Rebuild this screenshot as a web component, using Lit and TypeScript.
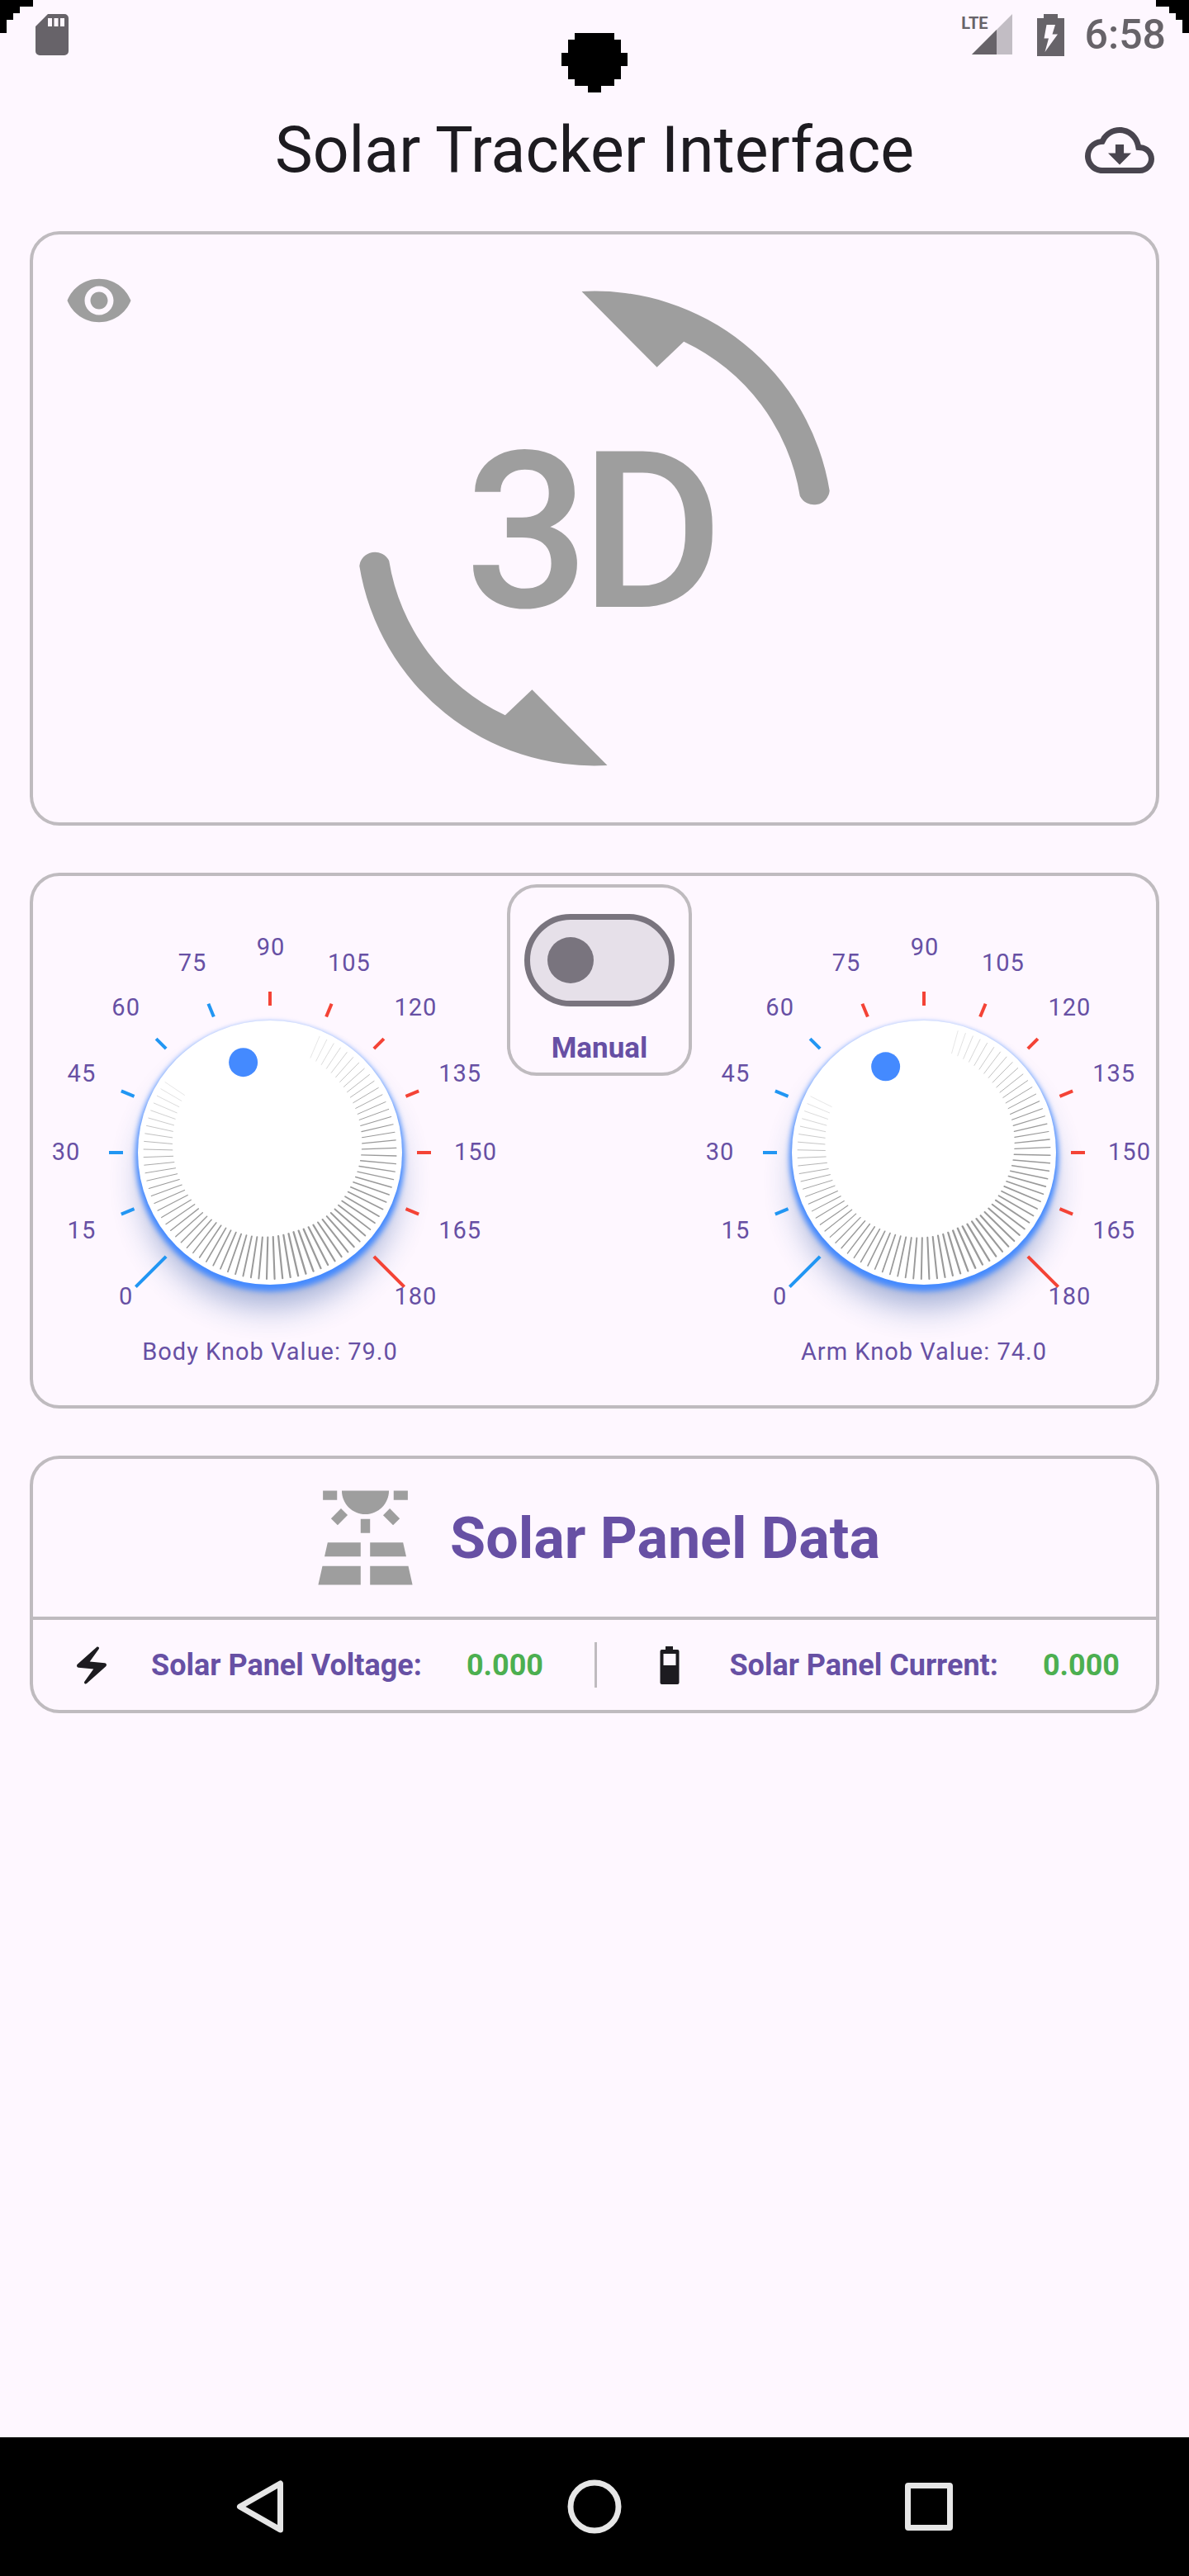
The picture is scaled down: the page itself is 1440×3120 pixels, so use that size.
import { LitElement, html, svg, css } from "lit";
import { customElement, property, state } from "lit/decorators.js";

const STEPS = [0, 15, 30, 45, 60, 75, 90, 105, 120, 135, 150, 165, 180];

/** Degrees clockwise from twelve o'clock for a value on the 0-180 scale. */
const dialAngle = (value: number): number => (value - 90) * 1.5;

const polar = (degrees: number, radius: number) => {
  const a = (degrees * Math.PI) / 180;
  return { x: Math.sin(a) * radius, y: -Math.cos(a) * radius };
};

@customElement("servo-knob")
export class ServoKnob extends LitElement {
  @property() name = "";
  @property({ type: Number }) value = 90;

  static styles = css`
    :host {
      display: flex;
      flex-direction: column;
      align-items: center;
      color: #6750a4;
      font-size: 29px;
      letter-spacing: 1px;
    }
    .dial {
      position: relative;
      width: 100%;
      max-width: 560px;
    }
    .face {
      display: block;
      width: 100%;
      overflow: visible;
    }
    .mark {
      fill: #6750a4;
      text-anchor: middle;
    }
    .tick {
      stroke-width: 4;
    }
    .low {
      stroke: #2196f3;
    }
    .high {
      stroke: #f44336;
    }
    .ambient {
      fill: #1f4a9c;
      opacity: 0.45;
      filter: blur(21px);
    }
    .glow {
      fill: #448aff;
      filter: blur(3px);
    }
    .cap {
      fill: #ffffff;
    }
    .ridge {
      stroke: #9a9a9a;
      stroke-linecap: round;
    }
    .dot {
      fill: #448aff;
    }
    .range {
      position: absolute;
      inset: 0;
      width: 100%;
      height: 100%;
      margin: 0;
      opacity: 0;
      cursor: pointer;
    }
    .caption {
      line-height: 42px;
      white-space: nowrap;
    }
  `;

  private onInput(e: Event) {
    this.value = Number((e.target as HTMLInputElement).value);
  }

  private renderStep(step: number) {
    const angle = dialAngle(step);
    const isEnd = step === 0 || step === 180;
    const a = polar(angle, 178);
    const b = polar(angle, isEnd ? 230 : 195);
    const t = polar(angle, 248);
    return svg`
      <line class="tick ${step <= this.value ? "low" : "high"}"
        x1=${a.x} y1=${a.y} x2=${b.x} y2=${b.y}></line>
      <text class="mark" x=${t.x + 1} y=${t.y + 9}>${step}</text>`;
  }

  private renderRidges() {
    const pointer = dialAngle(this.value);
    const ridges = [];
    for (let i = 11; i <= 89; i++) {
      const rel = i * 3.6;
      const d = rel > 180 ? 360 - rel : rel;
      const inner = 133 - 0.206 * d + Math.max(0, d - 130) * 0.09;
      const width = 0.25 + (2.1 * (d - 39.6)) / 140;
      const a = polar(pointer + rel, inner);
      const b = polar(pointer + rel, 153);
      ridges.push(svg`<line class="ridge" stroke-width=${width}
        x1=${a.x} y1=${a.y} x2=${b.x} y2=${b.y}></line>`);
    }
    return ridges;
  }

  render() {
    const dot = polar(dialAngle(this.value), 114);
    return html`
      <div class="dial">
        <svg class="face" viewBox="-280 -270 560 490" aria-hidden="true">
          <circle class="ambient" cy="33" r="152"></circle>
          <circle class="glow" cy="5" r="163"></circle>
          ${STEPS.map((s) => this.renderStep(s))}
          <circle class="cap" r="160"></circle>
          ${this.renderRidges()}
          <circle class="dot" cx=${dot.x} cy=${dot.y} r="17.5"></circle>
        </svg>
        <input
          class="range"
          id="range"
          type="range"
          min="0"
          max="180"
          .value=${String(this.value)}
          @input=${this.onInput}
        />
      </div>
      <label class="caption" for="range"
        >${this.name} Knob Value: ${this.value.toFixed(1)}</label
      >
    `;
  }
}

@customElement("app-root")
export class AppRoot extends LitElement {
  @state() private manual = false;

  static styles = css`
    :host {
      display: flex;
      flex-direction: column;
      position: relative;
      min-height: 100vh;
      background: #fef7ff;
      color: #1d1b20;
      font-family: Roboto, "Liberation Sans", sans-serif;
      --outline: #bfbbbf;
      --primary: #6750a4;
    }
    * {
      box-sizing: border-box;
    }
    svg {
      display: block;
      flex: none;
    }
    button {
      display: block;
      padding: 0;
      border: 0;
      background: none;
      color: inherit;
      cursor: pointer;
    }
    .cutout {
      position: absolute;
      top: 0;
      fill: #000000;
    }
    .corner-left {
      left: 0;
    }
    .corner-right {
      right: 0;
      transform: scaleX(-1);
    }
    .camera {
      top: 40px;
      left: 50%;
      margin-left: -40px;
    }
    .status {
      display: flex;
      align-items: center;
      justify-content: space-between;
      height: 84px;
      padding: 0 28px 0 43px;
      color: #676369;
    }
    .status-right {
      display: flex;
      align-items: center;
    }
    .network {
      align-self: flex-start;
      font-family: "Liberation Sans Narrow", Roboto, sans-serif;
      font-size: 20px;
      font-weight: 700;
      line-height: 32px;
      margin-right: -20px;
    }
    .signal {
      margin-right: 30px;
    }
    .clock {
      margin-left: 25px;
      font-size: 50px;
      font-weight: 500;
      line-height: 60px;
    }
    .appbar {
      display: grid;
      grid-template-columns: 1fr auto 1fr;
      align-items: center;
      height: 196px;
      padding: 0 42px;
    }
    .title {
      grid-column: 2;
      margin: 0;
      font-size: 77px;
      font-weight: 400;
      line-height: 98px;
    }
    .download {
      justify-self: end;
      color: #49454f;
    }
    main {
      display: flex;
      flex: 1;
      flex-direction: column;
      gap: 57px;
      padding: 0 36px 57px;
    }
    .card {
      border: 4px solid var(--outline);
      border-radius: 36px;
    }
    .preview {
      position: relative;
      display: flex;
      justify-content: center;
      padding: 68px 0;
      color: #9e9e9e;
    }
    .eye {
      position: absolute;
      top: 38px;
      left: 38px;
    }
    .icon-text {
      font-size: 265px;
      font-weight: 500;
    }
    .controls {
      display: grid;
      grid-template-columns: minmax(0, 575fr) 224px minmax(0, 563fr);
      align-items: start;
    }
    .controls servo-knob {
      padding: 65px 0 44px;
    }
    .mode {
      display: flex;
      flex-direction: column;
      align-items: center;
      gap: 27px;
      margin-top: 10px;
      padding: 32px 0 5px;
      color: var(--primary);
      font-size: 35px;
      font-weight: 700;
      line-height: 48px;
    }
    .switch {
      display: flex;
      align-items: center;
      appearance: none;
      width: 182px;
      height: 112px;
      margin: 0;
      padding: 0 21px;
      border: 7px solid #79747e;
      border-radius: 56px;
      background: #e6e0e9;
      cursor: pointer;
    }
    .switch::before {
      content: "";
      width: 56px;
      height: 56px;
      border-radius: 50%;
      background: #79747e;
    }
    .switch:checked {
      justify-content: flex-end;
      border-color: var(--primary);
      background: var(--primary);
    }
    .switch:checked::before {
      background: #ffffff;
    }
    .data-head {
      display: flex;
      align-items: center;
      justify-content: center;
      gap: 34px;
      padding: 27px 0;
      border-bottom: 4px solid var(--outline);
      color: #9e9e9e;
    }
    .data-title {
      margin: 0;
      color: var(--primary);
      font-size: 70px;
      font-weight: 700;
      line-height: 96px;
    }
    .readings {
      display: flex;
      align-items: center;
      justify-content: space-between;
      padding: 27px 44px;
      font-size: 36px;
      font-weight: 700;
      line-height: 48px;
    }
    .reading {
      display: flex;
      align-items: center;
      white-space: nowrap;
    }
    .reading-name {
      margin-left: 45px;
      color: var(--primary);
    }
    .reading-value {
      margin-left: 54px;
      color: #4caf50;
    }
    .rule {
      width: 3px;
      height: 55px;
      background: var(--outline);
    }
    .nav {
      display: grid;
      grid-template-columns: repeat(3, 1fr);
      align-items: center;
      justify-items: center;
      height: 168px;
      padding: 0 112px;
      background: #000000;
      color: #e6e6e6;
    }
  `;

  private renderCorner(side: string) {
    return html`<svg
      class="cutout ${side}"
      width="40"
      height="40"
      viewBox="0 0 40 40"
      aria-hidden="true"
    >
      <path d="M0 0H40V8H24V16H16V24H8V40H0Z"></path>
    </svg>`;
  }

  private renderStatus() {
    return html`
      <div class="status">
        <svg width="40" height="50" viewBox="0 0 40 50" fill="currentColor" aria-hidden="true">
          <path
            fill-rule="evenodd"
            d="M15 0H35A5 5 0 0 1 40 5V45A5 5 0 0 1 35 50H5A5 5 0 0 1 0 45V15ZM15 5V15H20V5ZM22.500 5V15H27.500V5ZM30 5V15H35V5Z"
          ></path>
        </svg>
        <div class="status-right">
          <span class="network">LTE</span>
          <svg class="signal" width="49" height="50" viewBox="0 0 49 50" aria-hidden="true">
            <path d="M49 0V49H0Z" fill="#c2bdc4"></path>
            <path d="M30 19V49H0Z" fill="currentColor"></path>
          </svg>
          <svg width="33" height="51" viewBox="0 0 33 51" aria-hidden="true">
            <path d="M8 0H25V5H33V51H0V5H8Z" fill="currentColor"></path>
            <path d="M11.500 13H22L18.500 24.500H25L9.500 46L14 29.500H8.500Z" fill="#fef7ff"></path>
          </svg>
          <span class="clock">6:58</span>
        </div>
      </div>
    `;
  }

  private renderAppBar() {
    return html`
      <header class="appbar">
        <h1 class="title">Solar Tracker Interface</h1>
        <button class="download" type="button" aria-label="Download">
          <svg width="84" height="84" viewBox="0 0 24 24" fill="currentColor">
            <path
              d="M19.350 10.040C18.670 6.590 15.640 4 12 4 9.110 4 6.600 5.640 5.350 8.040 2.340 8.360 0 10.910 0 14c0 3.310 2.690 6 6 6h13c2.760 0 5-2.240 5-5 0-2.640-2.050-4.780-4.650-4.960zM19 18H6c-2.210 0-4-1.790-4-4 0-2.050 1.530-3.760 3.560-3.970l1.070-.11.5-.95C8.080 7.140 9.940 6 12 6c2.620 0 4.880 1.860 5.390 4.430l.3 1.500 1.530.11c1.560.1 2.780 1.410 2.780 2.960 0 1.650-1.350 3-3 3zm-5.550-8h-2.900v3H8l4 4 4-4h-2.550z"
            ></path>
          </svg>
        </button>
      </header>
    `;
  }

  private renderPreview() {
    const arrow = "M272.500 1A288 288 0 0 1 572.700 242.500A19 19 0 0 1 536.800 248.800A251 251 0 0 0 396.200 61.700L363.600 92.700Z";
    return html`
      <section class="card preview">
        <button class="eye" type="button" aria-label="Show model">
          <svg width="84" height="84" viewBox="0 0 24 24" fill="currentColor">
            <path
              d="M12 4.500C7 4.500 2.730 7.610 1 12c1.730 4.390 6 7.500 11 7.500s9.270-3.110 11-7.500c-1.730-4.390-6-7.500-11-7.500zM12 17c-2.760 0-5-2.240-5-5s2.240-5 5-5 5 2.240 5 5-2.240 5-5 5zm0-8c-1.660 0-3 1.340-3 3s1.340 3 3 3 3-1.340 3-3-1.340-3-3-3z"
            ></path>
          </svg>
        </button>
        <svg width="576" height="576" viewBox="0 0 576 576" fill="currentColor">
          <path d=${arrow}></path>
          <path d=${arrow} transform="rotate(180 288 288)"></path>
          <text class="icon-text" y="383">
            <tspan x="131">3</tspan><tspan x="271">D</tspan>
          </text>
        </svg>
      </section>
    `;
  }

  private renderControls() {
    return html`
      <section class="card controls">
        <servo-knob name="Body" .value=${79}></servo-knob>
        <div class="card mode">
          <input
            class="switch"
            id="mode"
            type="checkbox"
            role="switch"
            .checked=${this.manual}
            @change=${(e: Event) => {
              this.manual = (e.target as HTMLInputElement).checked;
            }}
          />
          <label for="mode">Manual</label>
        </div>
        <servo-knob name="Arm" .value=${74}></servo-knob>
      </section>
    `;
  }

  private renderData() {
    return html`
      <section class="card">
        <div class="data-head">
          <svg width="137" height="137" viewBox="0 0 24 24" fill="currentColor" aria-hidden="true">
            <path
              d="M3.330 16H11v-3H4zM13 16h7.670L20 13h-7zM21.110 18H13v4h9zM2 22h9v-4H2.890zM11 8h2v3h-2zM15.760 7.210l1.420-1.420 2.120 2.120-1.420 1.420zM4.710 7.910l2.120-2.120 1.410 1.410-2.120 2.130zM3 2h3v2H3zM18 2h3v2h-3zM12 7c2.760 0 5-2.240 5-5H7c0 2.760 2.240 5 5 5z"
            ></path>
          </svg>
          <h2 class="data-title">Solar Panel Data</h2>
        </div>
        <div class="readings">
          <div class="reading">
            <svg width="54" height="54" viewBox="0 0 24 24" fill="currentColor" aria-hidden="true">
              <path
                d="M14.690 2.210 4.330 11.490c-.64.58-.28 1.650.58 1.730L13 14l-4.850 6.760c-.22.31-.19.74.08 1.010.3.3.77.31 1.080.02l10.360-9.280c.64-.58.28-1.650-.58-1.730L11 10l4.850-6.760c.22-.31.19-.74-.08-1.010-.3-.3-.77-.31-1.080-.02z"
              ></path>
            </svg>
            <span class="reading-name">Solar Panel Voltage:</span>
            <output class="reading-value">0.000</output>
          </div>
          <div class="rule"></div>
          <div class="reading">
            <svg width="54" height="54" viewBox="0 0 54 54" fill="currentColor" aria-hidden="true">
              <path
                fill-rule="evenodd"
                d="M22 4H31V8H36.500A2 2 0 0 1 38.500 10V48A2 2 0 0 1 36.500 50H17.500A2 2 0 0 1 15.500 48V10A2 2 0 0 1 17.500 8H22ZM19.500 13V27H34.500V13Z"
              ></path>
            </svg>
            <span class="reading-name">Solar Panel Current:</span>
            <output class="reading-value">0.000</output>
          </div>
        </div>
      </section>
    `;
  }

  private renderNav() {
    return html`
      <nav class="nav">
        <button type="button" aria-label="Back">
          <svg width="66" height="66" viewBox="0 0 66 66" fill="none" stroke="currentColor" stroke-width="7" stroke-linejoin="round">
            <path d="M57.500 5V61L8.500 33Z"></path>
          </svg>
        </button>
        <button type="button" aria-label="Home">
          <svg width="66" height="66" viewBox="0 0 66 66" fill="none" stroke="currentColor" stroke-width="7">
            <circle cx="33" cy="33" r="29"></circle>
          </svg>
        </button>
        <button type="button" aria-label="Recent apps">
          <svg width="66" height="66" viewBox="0 0 66 66" fill="currentColor">
            <path
              fill-rule="evenodd"
              d="M8 4H58A4 4 0 0 1 62 8V58A4 4 0 0 1 58 62H8A4 4 0 0 1 4 58V8A4 4 0 0 1 8 4ZM11 11V55H55V11Z"
            ></path>
          </svg>
        </button>
      </nav>
    `;
  }

  render() {
    return html`
      ${this.renderStatus()} ${this.renderAppBar()}
      <main>${this.renderPreview()} ${this.renderControls()} ${this.renderData()}</main>
      ${this.renderNav()} ${this.renderCorner("corner-left")}
      ${this.renderCorner("corner-right")}
      <svg class="cutout camera" width="80" height="72" viewBox="0 0 80 72" aria-hidden="true">
        <path
          d="M16 0H64V8H72V24H80V40H72V56H64V64H48V72H32V64H16V56H8V40H0V24H8V8H16Z"
        ></path>
      </svg>
    `;
  }
}
